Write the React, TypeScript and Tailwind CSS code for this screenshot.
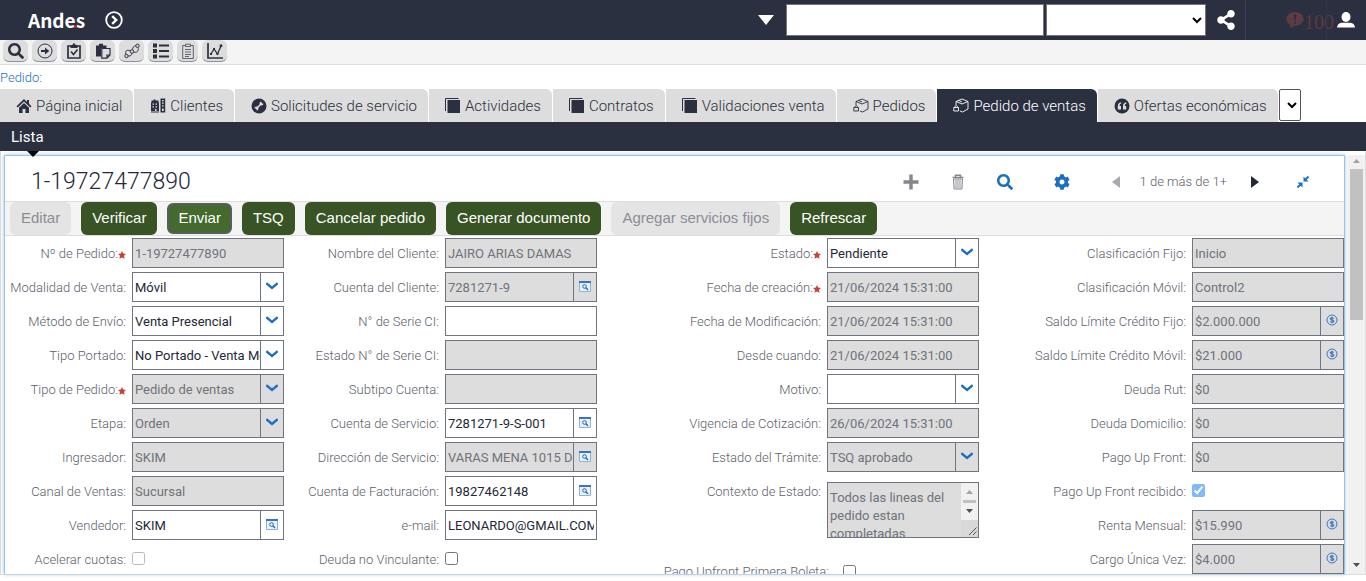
import React, { useId } from 'react';
import { FaSearch, FaShareAlt, FaCog } from 'react-icons/fa';

type IconProps = { className?: string };

const HomeIcon = ({ className }: IconProps) => (
  <svg viewBox="0 0 16 16" className={className} fill="currentColor" aria-hidden="true">
    <path d="M8 1 0.5 8.2l1.3 1.3L8 3.6l6.2 5.9 1.3-1.3L13 5.8V2h-2v2z" />
    <path d="M8 5 3 9.8V15h3.6v-4h2.8v4H13V9.800z" />
  </svg>
);
const BuildingsIcon = ({ className }: IconProps) => (
  <svg viewBox="0 0 16 16" className={className} fill="currentColor" aria-hidden="true">
    <path fillRule="evenodd" d="M1.500 2.500h2V1.500h2v1h3v2H9V13H6.500v-2H5v2H1V4.500h.5zM2.500 5.500v1.300h1.500V5.500zm3 0v1.300H7V5.500zM2.500 8.300v1.200h1.500V8.300zm3 0v1.200H7V8.300z" />
    <path fillRule="evenodd" d="M10.500.5h4.700v14h-4.700zM12 2v1.200h1.700V2zm0 2.600v1.200h1.700V4.600zm0 2.600v1.200h1.700V7.200zm0 3.400v2.400h1.700v-2.400z" />
    <path d="M1 13.500h8v1H1z" />
  </svg>
);
const WrenchIcon = ({ className }: IconProps) => (
  <svg viewBox="0 0 16 16" className={className} aria-hidden="true">
    <circle cx="8" cy="8" r="7.500" fill="currentColor" />
    <path d="m5 11 6-6" stroke="#ddd" strokeWidth="1.600" />
    <path d="M10.500 3.500A2 2 0 1 0 12.500 5.500l-1.500.3-.8-.8zM5.500 12.500A2 2 0 1 0 3.500 10.500l1.500-.3.8.8z" fill="#ddd" />
  </svg>
);
const SquaresIcon = ({ className }: IconProps) => (
  <svg viewBox="0 0 16 16" className={className} aria-hidden="true">
    <path d="M.5 13V.5h13" fill="none" stroke="currentColor" />
    <path d="M2.500 2H15v13H2.500z" fill="currentColor" />
  </svg>
);
const BoxIcon = ({ className }: IconProps) => (
  <svg viewBox="0 0 16 16" className={className} fill="none" stroke="currentColor" aria-hidden="true">
    <path d="M3 7V3.500L9 1l6 2.500V11l-5.500 3L7 13M3 3.500 9 6l6-2.500M5.500 2.300 9 4" strokeWidth="0.900" />
    <path d="M.8 9.500h4.700v3.500H.8zM2 9.300c0-2.400 2.500-2.400 2.500 0" strokeWidth="0.900" />
  </svg>
);
const QuoteIcon = ({ className }: IconProps) => (
  <svg viewBox="0 0 16 16" className={className} aria-hidden="true">
    <circle cx="8" cy="8" r="7.500" fill="currentColor" />
    <path d="M7.200 4.200C4.800 4.500 3.800 6.200 3.800 8v3.500h3.200V8H5.500C5.600 6.800 6 6 7.200 5.500zM12.400 4.200C10 4.500 9 6.200 9 8v3.500h3.200V8h-1.500c.1-1.200.5-2 1.700-2.500z" fill="#ddd" />
  </svg>
);
const ArrowCircleIcon = ({ className }: IconProps) => (
  <svg viewBox="0 0 16 16" className={className} fill="none" stroke="currentColor" aria-hidden="true">
    <circle cx="8" cy="8" r="7" />
    <path d="M4 8h6" strokeWidth="2" />
    <path d="M8 4.500 12.300 8 8 11.500z" fill="currentColor" stroke="none" />
  </svg>
);
const ClipCheckIcon = ({ className }: IconProps) => (
  <svg viewBox="0 0 16 16" className={className} fill="none" stroke="currentColor" aria-hidden="true">
    <path d="M5 3H2v12h12V3H11" strokeWidth="1.700" />
    <path d="M4.500 5V2h2l.5-1.500h2L9.500 2h2v3z" fill="currentColor" stroke="none" />
    <path d="m5 8.500 2.500 3L11.500 6.500" strokeWidth="1.600" />
  </svg>
);
const PasteIcon = ({ className }: IconProps) => (
  <svg viewBox="0 0 16 16" className={className} fill="none" stroke="currentColor" aria-hidden="true">
    <path d="M1 2.500h3V.8h4v1.700h3.500V5H6v8.500H1z" fill="currentColor" stroke="none" />
    <path d="M6.800 5.500h8.200v6.500L12 15.200H6.800zM15 12h-3v3" strokeWidth="1.200" />
  </svg>
);
const RouteIcon = ({ className }: IconProps) => (
  <svg viewBox="0 0 16 16" className={className} fill="none" stroke="currentColor" aria-hidden="true">
    <circle cx="2.500" cy="13" r="1.700" />
    <circle cx="8" cy="8.500" r="1.800" />
    <circle cx="13.500" cy="2.800" r="1.700" />
    <path d="M1.800 11.200C1 7.500 3 6.300 6.200 8M4.300 13c2.500.3 3.500-1 3.500-2.500M9.800 9c3 1.200 5.200-1 4.200-4.500M11.800 2.800C9.500 2.800 8.800 4.500 8.500 6.600" strokeWidth="0.900" />
  </svg>
);
const ListIcon = ({ className }: IconProps) => (
  <svg viewBox="0 0 16 16" className={className} fill="currentColor" aria-hidden="true">
    <path d="M0 .5h4v4H0zM0 6h4v4H0zM0 11.500h4v4H0zM6 1.500h10v2H6zM6 7h10v2H6zM6 12.500h10v2H6z" />
  </svg>
);
const NotesIcon = ({ className }: IconProps) => (
  <svg viewBox="0 0 16 16" className={className} fill="none" stroke="currentColor" aria-hidden="true">
    <path d="M5 2.500H2.700v13h10.600v-13H11M5.500 1.200h5v2.300h-5zM5 6.500h6M5 9h6M5 11.500h6M5 13.500h4" strokeWidth="0.700" />
  </svg>
);
const ChartIcon = ({ className }: IconProps) => (
  <svg viewBox="0 0 16 16" className={className} fill="none" stroke="currentColor" aria-hidden="true">
    <path d="M1 0v15h15" strokeWidth="1.700" />
    <path d="m4 11 3-5 3.500 5L14 3" strokeWidth="1.300" />
    <path d="M12.700 1.500h2.600v2.600h-2.600zM6 5h2v2H6zM3 10h2v2H3zM9.500 10h2v2h-2z" fill="currentColor" stroke="none" />
  </svg>
);
const UserIcon = ({ className }: IconProps) => (
  <svg viewBox="0 0 18 18" className={className} fill="currentColor" aria-hidden="true">
    <ellipse cx="9" cy="6" rx="4.500" ry="5" />
    <path d="M4.500 11.800h9c2.500.5 4.300 2 4.500 4.700H0c.2-2.700 2-4.200 4.500-4.700z" />
  </svg>
);
const TrashIcon = ({ className }: IconProps) => (
  <svg viewBox="0 0 16 16" className={className} fill="none" stroke="currentColor" aria-hidden="true">
    <path d="M3.500 5h9l-.6 10H4.100z" fill="#f4f4f6" />
    <path d="M6 6v8M8 6v8M10 6v8" strokeWidth="0.800" />
    <path d="M2.500 3.500h11M5.500 3V1.200h5V3" strokeWidth="1.500" />
  </svg>
);
const PickIcon = () => (
  <svg viewBox="0 0 12 11" className="h-[11px] w-3" fill="none" aria-hidden="true">
    <path d="M.5.5h11v10H.5z" fill="#e8f2fc" stroke="#8fb0dc" />
    <path d="M0 0h12v2H0z" fill="#3674c4" />
    <circle cx="5.500" cy="5.500" r="1.800" stroke="#1f63bb" />
    <path d="m6.800 6.800 2.200 2.200" stroke="#1f63bb" strokeWidth="1.300" />
  </svg>
);
const MoneyIcon = () => (
  <svg viewBox="0 0 12 12" className="size-3" fill="none" stroke="#3f77c2" aria-hidden="true">
    <circle cx="6" cy="6" r="5" />
    <path d="M7.800 4.500C7 3.500 4.300 3.500 4.300 4.800S7.800 5.900 7.800 7.200 5 8.500 4.200 7.500M6 2.800v6.400" strokeWidth="1.200" />
  </svg>
);
const ChevronIcon = () => (
  <svg viewBox="0 0 12 8" className="h-2 w-3" fill="none" aria-hidden="true">
    <path d="M.3 1.200 6 6l5.700-4.800" stroke="#1b6fc2" strokeWidth="2.300" />
  </svg>
);
const StarIcon = () => (
  <svg viewBox="0 0 10 10" className="mt-0.5 size-2" fill="#c9413a" aria-hidden="true">
    <path d="m5 0 1.500 3.200L10 3.600 7.500 6l.7 3.800L5 8 1.800 9.800 2.500 6 0 3.600l3.500-.4z" />
  </svg>
);

const tools = [
  { name: 'Buscar', icon: <FaSearch className="size-4" /> },
  { name: 'Ir a', icon: <ArrowCircleIcon className="size-4" /> },
  { name: 'Tareas', icon: <ClipCheckIcon className="size-4" /> },
  { name: 'Pegar', icon: <PasteIcon className="size-4" /> },
  { name: 'Ruta', icon: <RouteIcon className="size-4" /> },
  { name: 'Listado', icon: <ListIcon className="size-4" /> },
  { name: 'Notas', icon: <NotesIcon className="size-4" />, narrow: true },
  { name: 'Gráfico', icon: <ChartIcon className="size-4" /> },
];

const tabs = [
  { name: 'Página inicial', icon: HomeIcon },
  { name: 'Clientes', icon: BuildingsIcon },
  { name: 'Solicitudes de servicio', icon: WrenchIcon },
  { name: 'Actividades', icon: SquaresIcon },
  { name: 'Contratos', icon: SquaresIcon },
  { name: 'Validaciones venta', icon: SquaresIcon },
  { name: 'Pedidos', icon: BoxIcon },
  { name: 'Pedido de ventas', icon: BoxIcon, active: true },
  { name: 'Ofertas económicas', icon: QuoteIcon },
];

const actions = [
  { name: 'Editar', off: true },
  { name: 'Verificar' },
  { name: 'Enviar', focus: true },
  { name: 'TSQ' },
  { name: 'Cancelar pedido' },
  { name: 'Generar documento' },
  { name: 'Agregar servicios fijos', off: true },
  { name: 'Refrescar' },
];

type Kind = 'text' | 'select' | 'pick' | 'money' | 'check' | 'area';
type FieldDef = { label: string; value?: string; kind?: Kind; off?: boolean; required?: boolean; checked?: boolean };

const columns: FieldDef[][] = [
  [
    { label: 'Nº de Pedido:', value: '1-19727477890', off: true, required: true },
    { label: 'Modalidad de Venta:', value: 'Móvil', kind: 'select' },
    { label: 'Método de Envío:', value: 'Venta Presencial', kind: 'select' },
    { label: 'Tipo Portado:', value: 'No Portado - Venta Móvil', kind: 'select' },
    { label: 'Tipo de Pedido:', value: 'Pedido de ventas', kind: 'select', off: true, required: true },
    { label: 'Etapa:', value: 'Orden', kind: 'select', off: true },
    { label: 'Ingresador:', value: 'SKIM', off: true },
    { label: 'Canal de Ventas:', value: 'Sucursal', off: true },
    { label: 'Vendedor:', value: 'SKIM', kind: 'pick' },
    { label: 'Acelerar cuotas:', kind: 'check', off: true },
  ],
  [
    { label: 'Nombre del Cliente:', value: 'JAIRO ARIAS DAMAS', off: true },
    { label: 'Cuenta del Cliente:', value: '7281271-9', kind: 'pick', off: true },
    { label: 'N° de Serie CI:', value: '' },
    { label: 'Estado N° de Serie CI:', value: '', off: true },
    { label: 'Subtipo Cuenta:', value: '', off: true },
    { label: 'Cuenta de Servicio:', value: '7281271-9-S-001', kind: 'pick' },
    { label: 'Dirección de Servicio:', value: 'VARAS MENA 1015 DEPTO', kind: 'pick', off: true },
    { label: 'Cuenta de Facturación:', value: '19827462148', kind: 'pick' },
    { label: 'e-mail:', value: 'LEONARDO@GMAIL.COM' },
    { label: 'Deuda no Vinculante:', kind: 'check' },
  ],
  [
    { label: 'Estado:', value: 'Pendiente', kind: 'select', required: true },
    { label: 'Fecha de creación:', value: '21/06/2024 15:31:00', off: true, required: true },
    { label: 'Fecha de Modificación:', value: '21/06/2024 15:31:00', off: true },
    { label: 'Desde cuando:', value: '21/06/2024 15:31:00', off: true },
    { label: 'Motivo:', value: '', kind: 'select' },
    { label: 'Vigencia de Cotización:', value: '26/06/2024 15:31:00', off: true },
    { label: 'Estado del Trámite:', value: 'TSQ aprobado', kind: 'select', off: true },
    { label: 'Contexto de Estado:', value: 'Todos las lineas del pedido estan completadas', kind: 'area', off: true },
  ],
  [
    { label: 'Clasificación Fijo:', value: 'Inicio', off: true },
    { label: 'Clasificación Móvil:', value: 'Control2', off: true },
    { label: 'Saldo Límite Crédito Fijo:', value: '$2.000.000', kind: 'money', off: true },
    { label: 'Saldo Límite Crédito Móvil:', value: '$21.000', kind: 'money', off: true },
    { label: 'Deuda Rut:', value: '$0', off: true },
    { label: 'Deuda Domicilio:', value: '$0', off: true },
    { label: 'Pago Up Front:', value: '$0', off: true },
    { label: 'Pago Up Front recibido:', kind: 'check', off: true, checked: true },
    { label: 'Renta Mensual:', value: '$15.990', kind: 'money', off: true },
    { label: 'Cargo Única Vez:', value: '$4.000', kind: 'money', off: true },
  ],
];

const labelClass = 'flex h-[30px] flex-1 items-center justify-end whitespace-nowrap pt-px text-[13px] font-light text-[#5c616b]';
const inputBase = 'h-full w-full min-w-0 flex-1 appearance-none bg-transparent pl-0.5 text-[13px] opacity-100 outline-none';
const cellClass = 'flex w-[23px] shrink-0 items-center justify-center border-l border-[#6f747e] pb-0.5';

function Field({ def }: { def: FieldDef }) {
  const id = useId();
  const { kind = 'text', off, value, label } = def;
  const box = off ? 'bg-[#ddd] text-[#6f737b]' : 'bg-white text-[#222838]';
  return (
    <div className="flex gap-1.5">
      <label htmlFor={id} className={labelClass}>
        {label}
        {def.required && <StarIcon />}
      </label>
      {kind === 'check' && (
        <div className="flex h-[30px] w-[152px] items-center pb-0.5">
          <input id={id} type="checkbox" defaultChecked={def.checked} className={off ? 'pointer-events-none size-[13px] opacity-50' : 'size-[13px]'} />
        </div>
      )}
      {kind === 'area' && (
        <div className="mt-1.5 flex h-14 w-[152px] border border-[#6f747e] bg-[#ddd]">
          <textarea id={id} readOnly defaultValue={value} className="min-w-0 flex-1 resize-none overflow-hidden px-0.5 pt-1.5 text-[13px] leading-[18px] text-[#6f737b] outline-none" />
          <div className="flex w-[17px] shrink-0 flex-col bg-[#d8d8d8]" aria-hidden="true">
            <svg viewBox="0 0 17 37" className="h-[37px] w-[17px]">
              <path d="M0 0h17v37H0z" fill="#f1f1f1" />
              <path d="m5 11 3.500-4L12 11z" fill="#a3a3a3" />
              <path d="M2 17h13v3H2z" fill="#c1c1c1" />
              <path d="m5 26 3.500 4 3.500-4z" fill="#505050" />
            </svg>
            <svg viewBox="0 0 17 17" className="size-[17px]" stroke="#555">
              <path d="m8 15 7.500-7.500M12 15l3.500-3.500" />
            </svg>
          </div>
        </div>
      )}
      {kind !== 'check' && kind !== 'area' && (
        <div className={`flex h-[30px] w-[152px] border border-[#6f747e] ${box}`}>
          {kind === 'select' ? (
            <select id={id} disabled={off} className={`${inputBase} pt-px`}>
              <option>{value}</option>
            </select>
          ) : (
            <input id={id} type="text" readOnly={off} defaultValue={value} className={kind === 'text' ? `${inputBase} pr-0.5` : inputBase} />
          )}
          {kind === 'select' && <span className={cellClass}><ChevronIcon /></span>}
          {kind === 'pick' && <button type="button" aria-label={`Seleccionar ${label}`} className={cellClass}><PickIcon /></button>}
          {kind === 'money' && <button type="button" aria-label={`Moneda ${label}`} className={cellClass}><MoneyIcon /></button>}
        </div>
      )}
    </div>
  );
}

export default function App() {
  return (
    <div className="flex h-screen flex-col overflow-hidden bg-white pb-1.5 font-['Roboto',sans-serif]">
      <header className="flex h-10 shrink-0 items-center bg-[#2a3040] text-white">
        <span className="relative ml-7 font-['Noto_Sans_CJK_SC','Noto_Sans',sans-serif] text-[19px] leading-6 font-bold">
          Andes
          <span className="absolute right-2 bottom-1 size-[3px] rounded-full bg-[#d81e2c]" />
        </span>
        <button type="button" aria-label="Expandir" className="ml-5">
          <svg viewBox="0 0 18 18" className="size-[18px]" fill="none" stroke="#fff">
            <circle cx="9" cy="9" r="7.800" strokeWidth="1.800" />
            <path d="m7.200 5.200 4 3.800-4 3.800" strokeWidth="2.400" />
          </svg>
        </button>
        <div className="ml-auto flex h-full items-center">
          <button type="button" aria-label="Desplegar" className="mr-3">
            <svg viewBox="0 0 16 10" className="h-2.5 w-4" fill="#fff"><path d="M0 0h16L8 10z" /></svg>
          </button>
          <input type="text" aria-label="Texto de búsqueda" className="mr-0.5 h-8 w-[258px] border border-[#767676] bg-white px-1 text-sm text-black" />
          <select aria-label="Tipo de búsqueda" className="h-8 w-40 border border-[#767676] bg-white text-sm text-black"><option /></select>
          <button type="button" aria-label="Compartir" className="flex h-full w-10 items-center justify-center border-r border-[#3a4051]"><FaShareAlt className="size-5" /></button>
          <div className="flex h-full w-20 items-center justify-end text-[#5f3a40]">
            <svg viewBox="0 0 18 18" className="size-[18px]" aria-hidden="true">
              <path d="M9 1C4 1 .5 4 .5 8c0 3 1.500 4.800 3.800 5.800L4 17.500 8 15c5.500 0 9.500-3 9.500-7S14 1 9 1z" fill="#5f3a40" />
              <path d="M8 3.500h2.200L9.800 9.500H8.400zM8.200 10.800h1.800v1.800H8.200z" fill="#2a3040" />
            </svg>
            <span className="-mr-2 pt-1 font-['Liberation_Serif',serif] text-xl">100</span>
          </div>
          <button type="button" aria-label="Usuario" className="flex h-full w-10 items-center justify-center border-l border-[#313748] pr-0.5"><UserIcon className="size-[18px]" /></button>
        </div>
      </header>

      <div className="flex h-[25px] shrink-0 gap-1 border-b border-[#ddd] bg-[#f4f4f4] px-[3px] text-[#2a3040]">
        {tools.map((t) => (
          <button
            key={t.name}
            type="button"
            aria-label={t.name}
            className={`flex h-[22px] items-center justify-center rounded-md border-b border-[#8e9097] bg-[#ddd] ${t.narrow ? 'w-[21px]' : 'w-[25px]'}`}
          >
            {t.icon}
          </button>
        ))}
      </div>

      <div className="flex h-6 shrink-0 items-center pt-px text-[13px] font-light text-[#1f6fbf]">Pedido:</div>

      <nav className="flex h-[33px] shrink-0 items-stretch gap-px">
        {tabs.map((t) => {
          const Icon = t.icon;
          return (
            <a
              key={t.name}
              href="#"
              className={`flex items-center gap-1 rounded-tr-md pr-[11px] pl-4 text-[15px] font-light whitespace-nowrap ${t.active ? 'bg-[#2a3040] text-white' : 'bg-[#ddd] text-[#2a3040]'}`}
            >
              <Icon className="size-4" />
              <span className="pt-0.5">{t.name}</span>
            </a>
          );
        })}
        <select aria-label="Más pantallas" className="mb-px w-[22px] rounded-xs border border-[#555] bg-white text-black"><option /></select>
      </nav>

      <div className="relative flex h-[29px] shrink-0 items-center bg-[#2a3040] px-[11px] pt-0.5 text-[15px] text-white">
        <a href="#">Lista</a>
        <svg viewBox="0 0 12 6" className="absolute top-full left-[27px] z-10 h-1.5 w-3"><path d="M0 0h12L6 6z" /></svg>
      </div>

      <main className="flex min-h-0 flex-1 border-x border-b border-[#ddd] pt-1">
        <section className="ml-[3px] min-w-0 flex-1 overflow-hidden border-x border-t border-[#9cc4e8] shadow-[0_0_4px_#9cc4e8]">
          <div className="flex h-[46px] items-center border-b border-[#ddd] pr-[34px] pl-[26px]">
            <h1 className="mt-2 text-[23px] font-light text-[#222838]">1-19727477890</h1>
            <div className="ml-auto flex items-center pt-1.5 text-[#84868f]">
              <button type="button" aria-label="Nuevo">
                <svg viewBox="0 0 16 16" className="size-4" fill="currentColor"><path d="M6.300 0.500h3.400v5.800h5.800v3.400H9.700v5.800H6.300V9.700H.5V6.300h5.800z" /></svg>
              </button>
              <button type="button" aria-label="Eliminar" className="ml-[31px]"><TrashIcon className="size-4" /></button>
              <button type="button" aria-label="Consultar" className="ml-[31px] text-[#1b6fc2]"><FaSearch className="size-4" /></button>
              <button type="button" aria-label="Configuración" className="ml-[41px] text-[#1b6fc2]"><FaCog className="size-4" /></button>
              <button type="button" aria-label="Anterior" className="ml-[42px] text-[#a8aab2]">
                <svg viewBox="0 0 8 12" className="h-3 w-2" fill="currentColor"><path d="M8 0v12L0 6z" /></svg>
              </button>
              <span className="ml-5 text-[13px] font-light text-[#5c616b]">1 de más de 1+</span>
              <button type="button" aria-label="Siguiente" className="ml-6 text-[#222838]">
                <svg viewBox="0 0 8 12" className="h-3 w-2" fill="currentColor"><path d="M0 0v12l8-6z" /></svg>
              </button>
              <button type="button" aria-label="Contraer" className="ml-[37px] text-[#1b6fc2]">
                <svg viewBox="0 0 14 14" className="size-3.5" fill="none" stroke="currentColor" strokeWidth="1.800">
                  <path d="m1.500 12.500 3-3M9.500 4.500l3-3" />
                  <path d="M1.500 7.500h5V12.500zM7.500 1.500v5h5z" fill="currentColor" stroke="none" />
                </svg>
              </button>
            </div>
          </div>

          <div className="flex h-[34px] items-center gap-2.5 border-b border-[#ddd] bg-[#f4f4f4] pl-[5px] font-['Liberation_Sans',sans-serif] text-[15px]">
            {actions.map((a) => (
              <button
                key={a.name}
                type="button"
                disabled={a.off}
                className={
                  a.off
                    ? 'h-[33px] rounded-md bg-[#e4e4e4] px-[11px] text-[#8b8d96]'
                    : a.focus
                      ? 'h-[31px] rounded-md border-2 border-[#595d63] bg-[#446a2e] px-[9px] text-white'
                      : 'h-[33px] rounded-md bg-[#385425] px-[11px] text-white'
                }
              >
                {a.name}
              </button>
            ))}
          </div>

          <form className="grid grid-cols-[279fr_313fr_382fr_365fr] pt-0.5">
            {columns.map((col, i) => (
              <div key={i} className="flex flex-col gap-1">
                {col.map((f) => (
                  <Field key={f.label} def={f} />
                ))}
                {i === 2 && (
                  <div className="flex justify-end gap-3.5 pt-5">
                    <label htmlFor="upfront" className="text-[13px] font-light whitespace-nowrap text-[#5c616b]">Pago Upfront Primera Boleta:</label>
                    <div className="flex w-[136px] items-center">
                      <input id="upfront" type="checkbox" className="size-[13px]" />
                    </div>
                  </div>
                )}
              </div>
            ))}
          </form>
        </section>

        <div className="ml-[3px] flex w-[17px] shrink-0 flex-col items-center bg-[#f1f1f1]" aria-hidden="true">
          <svg viewBox="0 0 17 14" className="h-3.5 w-[17px]"><path d="m5 8 3.500-4L12 8z" fill="#a3a3a3" /></svg>
          <div className="h-[36%] w-[13px] bg-[#c1c1c1]" />
          <svg viewBox="0 0 17 17" className="mt-auto size-[17px]"><path d="m5 6 3.500 4L12 6z" fill="#505050" /></svg>
        </div>
      </main>
    </div>
  );
}
